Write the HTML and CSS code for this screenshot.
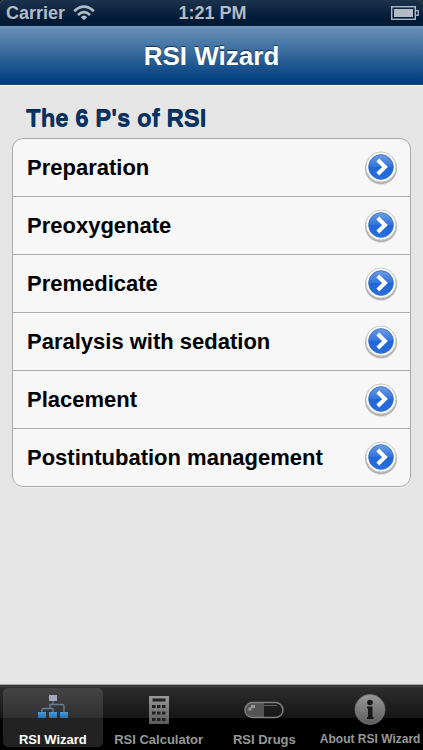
FILE: index.html
```html
<!DOCTYPE html>
<html lang="en">
<head>
<meta charset="utf-8">
<meta name="viewport" content="width=device-width, initial-scale=1">
<title>RSI Wizard</title>
<link rel="stylesheet" href="styles.css">
</head>
<body>
<svg class="defs" width="0" height="0" aria-hidden="true">
  <defs>
    <linearGradient id="blue" x1="0" y1="0" x2="0" y2="1">
      <stop offset="0" stop-color="#6f9be6"/><stop offset=".48" stop-color="#3574dc"/><stop offset=".52" stop-color="#1f66d8"/><stop offset="1" stop-color="#2a6edc"/>
    </linearGradient>
    <linearGradient id="gray" x1="0" y1="0" x2="0" y2="1">
      <stop offset="0" stop-color="#989898"/><stop offset="1" stop-color="#5c5c5c"/>
    </linearGradient>
    <linearGradient id="node" x1="0" y1="0" x2="0" y2="1">
      <stop offset="0" stop-color="#5199cf"/><stop offset="1" stop-color="#2471b3"/>
    </linearGradient>
    <symbol id="disclose" viewBox="0 0 36 38">
      <circle cx="18" cy="20" r="16" fill="#000" opacity=".1"/>
      <circle cx="18" cy="19" r="16" fill="#000" opacity=".2"/>
      <circle cx="18" cy="18" r="15" fill="#fff" stroke="#cacaca"/>
      <circle cx="18" cy="18" r="12.4" fill="url(#blue)" stroke="#2b66c0" stroke-width=".7"/>
      <path d="M14.8 11 22 18l-7.200 7" fill="none" stroke="#fff" stroke-width="4"/>
    </symbol>
  </defs>
</svg>
<div class="app">
  <div class="status">
    <div class="carrier"><span>Carrier</span>
      <svg width="22" height="16" viewBox="0 0 22 16" aria-hidden="true">
        <g fill="none" stroke="#b3bbc5" stroke-width="2.7"><path d="M1.2 6.2Q11-2.8 20.8 6.2"/><path d="M5 10Q11 4.3 17 10"/></g>
        <path d="M7.8 12Q11 9 14.2 12L11 15.3z" fill="#b3bbc5"/>
      </svg>
    </div>
    <span>1:21 PM</span>
    <div class="power">
      <svg width="28" height="14" viewBox="0 0 28 14" role="img" aria-label="Battery full">
        <rect x=".7" y=".7" width="23.6" height="12.6" fill="none" stroke="#aeb8c4" stroke-width="1.4"/>
        <path d="M3 3h19v8H3z" fill="#b3bbc5"/><path d="M25 4.7h2.2v4.6H25" fill="none" stroke="#aeb8c4" stroke-width="1.3"/>
      </svg>
    </div>
  </div>
  <header class="nav"><h1>RSI Wizard</h1></header>
  <main>
    <h2>The 6 P's of RSI</h2>
    <ul class="list">
      <li><button type="button">Preparation<svg class="arrow" aria-hidden="true"><use href="#disclose"/></svg></button></li>
      <li><button type="button">Preoxygenate<svg class="arrow" aria-hidden="true"><use href="#disclose"/></svg></button></li>
      <li><button type="button">Premedicate<svg class="arrow" aria-hidden="true"><use href="#disclose"/></svg></button></li>
      <li><button type="button">Paralysis with sedation<svg class="arrow" aria-hidden="true"><use href="#disclose"/></svg></button></li>
      <li><button type="button">Placement<svg class="arrow" aria-hidden="true"><use href="#disclose"/></svg></button></li>
      <li><button type="button">Postintubation management<svg class="arrow" aria-hidden="true"><use href="#disclose"/></svg></button></li>
    </ul>
  </main>
  <nav class="tabs">
    <button type="button" class="tab selected" aria-current="page">
      <svg width="32" height="32" viewBox="0 0 32 32" aria-hidden="true">
        <path d="M16 10v3.500M5 21v-2q0-1.500 1.500-1.500H16M13 17.500v-4H25.500q1.500 0 1.500 1.500v6M16 17.500v4" fill="none" stroke="#697d98" stroke-width="1.300"/>
        <rect x="12" y="4" width="8" height="6" fill="#a3a8bd"/>
        <g fill="url(#node)"><rect x="1" y="21" width="8" height="6"/><rect x="12" y="21" width="8" height="6"/><rect x="23" y="21" width="8" height="6"/></g>
      </svg>
      <span>RSI Wizard</span>
    </button>
    <button type="button" class="tab">
      <svg width="32" height="32" viewBox="0 0 32 32" aria-hidden="true">
        <rect x="6" y="5" width="20" height="28" fill="url(#gray)"/>
        <g fill="#202020"><path d="M9.500 7.500h13v3h-13z"/>
        <path d="M9 14h3.500v3H9zm5 0h3.500v3H14zm5 0h3.500v3H19zM9 20.500h3.500v3H9zm5 0h3.500v3H14zm5 0h3.500v3H19zM9 27h3.500v3H9zm5 0h3.500v3H14zm5 0h3.500v3H19z"/></g>
      </svg>
      <span>RSI Calculator</span>
    </button>
    <button type="button" class="tab">
      <svg width="40" height="32" viewBox="0 0 40 32" aria-hidden="true">
        <path d="M20 12H9Q2 12 2 19t7 7h11z" fill="#555"/>
        <rect x="1" y="11.500" width="38" height="15" rx="7.500" fill="none" stroke="#808080" stroke-width="1.500"/>
        <path d="M20 14.500h13" stroke="#606060" stroke-width="1"/>
        <path d="M4.500 16.500h3v3h-3zM7 14h4v3H7z" fill="#999"/>
      </svg>
      <span>RSI Drugs</span>
    </button>
    <button type="button" class="tab">
      <svg width="32" height="32" viewBox="0 0 32 32" aria-hidden="true">
        <circle cx="16" cy="18.500" r="15" fill="url(#gray)" stroke="#777" stroke-width=".8"/>
        <circle cx="16" cy="11.500" r="2.800" fill="#181818"/>
        <path d="M13 15.500h5.500v10.500h1v2h-6.500v-2h1v-8.500h-1z" fill="#181818"/>
      </svg>
      <span class="long">About RSI Wizard</span>
    </button>
  </nav>
</div>
</body>
</html>
```
FILE: styles.css
```css
* { box-sizing: border-box; }
body {
  margin: 0;
  background: #000;
  font-family: "Liberation Sans", Arial, sans-serif;
  font-weight: bold;
}
button { font: inherit; border: 0; background: none; padding: 0; }
h1, h2, ul { margin: 0; padding: 0; }
.defs { position: absolute; }
.app { min-height: 100vh; display: flex; flex-direction: column; background: #e5e5e5; }
.status {
  display: grid;
  grid-template-columns: 1fr auto 1fr;
  align-items: center;
  height: 26px;
  padding: 0 4px 0 6px;
  background: linear-gradient(#1b324c, #011a36 75%);
  border-radius: 4px 4px 0 0;
  box-shadow: 0 -4px 0 4px #000;
  color: #b3bbc5;
  font-size: 18px;
}
.carrier { display: flex; align-items: center; gap: 8px; }
.power { display: flex; justify-content: flex-end; }
.nav {
  display: flex;
  align-items: center;
  justify-content: center;
  height: 59px;
  border-top: 1px solid #7b9bbd;
  border-bottom: 1px solid #26446f;
  background: linear-gradient(#6990b8, #004080 95%);
  color: #fff;
  text-shadow: 0 -1px 1px rgba(0, 20, 50, .7);
}
h1 { font-size: 26px; line-height: 30px; }
main { flex: 1; padding: 19px 12px; border-top: 1px solid #f5f5f5; }
h2 {
  padding: 0 14px;
  font-size: 24px;
  line-height: 28px;
  color: #063565;
  text-shadow: 0 -1px 0 #051f40;
}
.list {
  margin-top: 5px;
  list-style: none;
  border: 1px solid #a9a9a9;
  border-radius: 11px;
  background: #f7f7f7;
  box-shadow: 0 1px 0 #f0f0f0;
}
li + li { border-top: 1px solid #adadad; }
li button {
  display: flex;
  align-items: center;
  justify-content: space-between;
  width: 100%;
  height: 57px;
  padding: 0 11px 0 14px;
  color: #000;
  font-size: 22px;
  text-align: left;
}
.arrow { width: 36px; height: 38px; }
.tabs {
  display: grid;
  grid-template-columns: repeat(4, minmax(0, 1fr));
  height: 66px;
  padding: 3px 0;
  border-top: 1px solid #a5aaa7;
  background: linear-gradient(#303030 0 1px, #454545 1px 2px, #2d2d2d 2px, #151515 33px, #000 33px);
}
.tab {
  display: flex;
  flex-direction: column;
  align-items: center;
  justify-content: space-between;
  margin: 0 3px;
  padding-top: 3px;
  border-radius: 5px;
  color: #989898;
  font-size: 13px;
  line-height: 15px;
  white-space: nowrap;
}
.tab svg { overflow: visible; }
.selected { color: #fff; background: linear-gradient(#444, #303030 30px, #222 30px); }
.long { font-size: 12px; }
```
